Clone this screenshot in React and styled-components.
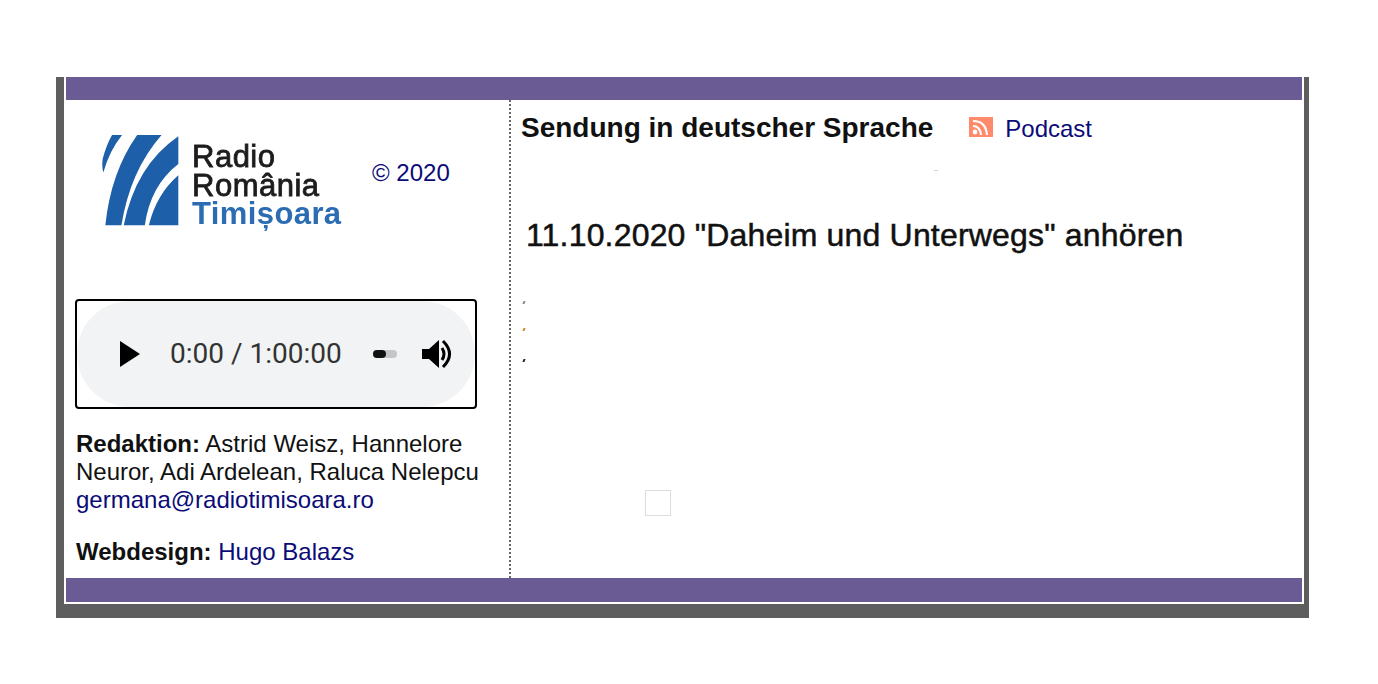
import styled, { createGlobalStyle } from 'styled-components';

const GlobalStyle = createGlobalStyle`
  body {
    margin: 0;
    background: #fff;
    font-family: "Liberation Sans", Arial, sans-serif;
    color: #111;
  }
`;

const Page = styled.div`
  padding: 77px 69px 66px 56px;
`;

const Frame = styled.div`
  border-style: solid;
  border-color: #5e5e5e;
  border-width: 0 5px 14px 8px;
  padding: 0 2px 2px;
`;

const Bar = styled.div`
  height: ${(p) => p.$height}px;
  background: #6b5b95;
`;

const Columns = styled.div`
  display: grid;
  grid-template-columns: 445px 1fr;
  height: 478px;
`;

const Side = styled.div`
  border-right: 2px dotted #666;
  padding: 0 9px;
  font-size: 24px;
  line-height: 28px;
`;

const LogoRow = styled.div`
  display: flex;
  align-items: flex-start;
  height: 199px;
  padding: 34px 0 0 27px;
  box-sizing: border-box;
`;

const LogoMark = styled.svg`
  width: 77px;
  height: 93px;
  flex: none;
  filter: blur(0.4px);
`;

const LogoText = styled.div`
  margin: 9px 0 0 13px;
  width: 180px;
  height: 85px;
  flex: none;
  font-size: 31px;
  line-height: 28.5px;
  letter-spacing: 0.5px;
  color: #1c1c1c;
  -webkit-text-stroke: 0.8px currentColor;
  filter: blur(0.3px);
  white-space: nowrap;
`;

const LogoCity = styled.div`
  color: #2b6cb3;
  font-weight: 700;
  letter-spacing: 0.4px;
  -webkit-text-stroke: 0;
`;

const Copyright = styled.a`
  color: #0b0b78;
  margin-top: 25px;
`;

const Player = styled.div`
  height: 106px;
  width: 398px;
  border: 2px solid #000;
  border-radius: 4px;
  background: #fff;
`;

const PlayerPill = styled.div`
  height: 100%;
  background: #f1f3f4;
  border-radius: 53px / 53px;
  display: flex;
  align-items: center;
  padding: 0 0 0 43px;
`;

const PlayIcon = styled.svg`
  width: 20px;
  height: 26px;
  flex: none;
  margin-right: 30px;
`;

const Time = styled.span`
  font-family: Roboto, "Liberation Sans", sans-serif;
  font-size: 28px;
  color: #333;
  white-space: nowrap;
`;

const VolumeTrack = styled.div`
  width: 24px;
  height: 8px;
  border-radius: 4px;
  background: #c4c5c6;
  margin: 0 25px 0 31px;
  flex: none;
`;

const VolumeFill = styled.div`
  width: 13px;
  height: 8px;
  border-radius: 4px;
  background: #111;
`;

const VolumeIcon = styled.svg`
  width: 32px;
  height: 30px;
  flex: none;
`;

const Credits = styled.p`
  margin: ${(p) => p.$top}px 0 0 1px;
  white-space: nowrap;
`;

const Link = styled.a`
  color: #0b0b78;
  text-decoration: none;
`;

const Main = styled.div`
  padding: 11px 0 0 10px;
`;

const HeadRow = styled.div`
  display: flex;
  align-items: center;
  height: 34px;
`;

const Heading = styled.h2`
  margin: 0;
  font-size: 28px;
  line-height: 34px;
  font-weight: 700;
  color: #111;
`;

const RssIcon = styled.svg`
  width: 24px;
  height: 20px;
  margin: -2px 12px 0 36px;
  flex: none;
`;

const PodcastLink = styled(Link)`
  font-size: 24px;
  margin-top: 2px;
`;

const Speck = styled.div`
  width: ${(p) => p.$w || 2}px;
  height: ${(p) => p.$h || 3}px;
  margin: ${(p) => p.$top}px 0 0 ${(p) => p.$left}px;
  background: ${(p) => p.$color};
  transform: skewX(-20deg);
`;

const Title = styled.h1`
  margin: 46px 0 0 5px;
  font-size: 32px;
  line-height: 36px;
  font-weight: 400;
  letter-spacing: 0.18px;
  color: #111;
  white-space: nowrap;
  -webkit-text-stroke: 0.5px currentColor;
`;

const Placeholder = styled.div`
  width: 24px;
  height: 24px;
  border: 1px solid #ddd;
  margin: 128px 0 0 124px;
`;

export default function App() {
  return (
    <>
      <GlobalStyle />
      <Page>
        <Frame>
          <Bar $height={23} />
          <Columns>
            <Side>
              <LogoRow>
                <LogoMark viewBox="20 18 230 272">
                  <g fill="#1d5fa8">
                    <path d="M50 18H80Q42 65 24 130Q19 115 22 90Q32 50 50 18Z" />
                    <path d="M125 18H198Q104 125 78 288H30Q46 130 125 18Z" />
                    <path d="M248 22V105Q164 170 148 288H85Q120 110 248 22Z" />
                    <path d="M248 138V288H160Q182 195 248 138Z" />
                  </g>
                </LogoMark>
                <LogoText>
                  Radio
                  <br />
                  România
                  <LogoCity>Timișoara</LogoCity>
                </LogoText>
                <Copyright>© 2020</Copyright>
              </LogoRow>
              <Player>
                <PlayerPill>
                  <PlayIcon viewBox="0 0 20 26">
                    <path d="M0 0L20 13L0 26Z" fill="#000" />
                  </PlayIcon>
                  <Time>0:00 / 1:00:00</Time>
                  <VolumeTrack>
                    <VolumeFill />
                  </VolumeTrack>
                  <VolumeIcon viewBox="0 0 32 30">
                    <path d="M0 10H7L17 1V29L7 20H0Z" fill="#000" />
                    <path d="M20 9Q24 15 20 21" fill="none" stroke="#000" strokeWidth="3" />
                    <path d="M21 2Q34 15 21 28" fill="none" stroke="#000" strokeWidth="3" />
                  </VolumeIcon>
                </PlayerPill>
              </Player>
              <Credits $top={21}>
                <b>Redaktion:</b> Astrid Weisz, Hannelore
                <br />
                Neuror, Adi Ardelean, Raluca Nelepcu
                <br />
                <Link href="#">germana@radiotimisoara.ro</Link>
              </Credits>
              <Credits $top={24}>
                <b>Webdesign:</b> <Link href="#">Hugo Balazs</Link>
              </Credits>
            </Side>
            <Main>
              <HeadRow>
                <Heading>Sendung in deutscher Sprache</Heading>
                <RssIcon viewBox="0 0 24 20">
                  <rect width="24" height="20" fill="#ff8a6c" />
                  <circle cx="6" cy="15" r="2.4" fill="#fff" />
                  <path d="M4 9Q11 9 12 18" fill="none" stroke="#fff" strokeWidth="2.2" />
                  <path d="M4 4Q17 4 18 18" fill="none" stroke="#fff" strokeWidth="2.2" />
                </RssIcon>
                <PodcastLink href="#">Podcast</PodcastLink>
              </HeadRow>
              <Speck $w={4} $h={1} $top={25} $left={413} $color="#e3c9c9" />
              <Title>11.10.2020 "Daheim und Unterwegs" anhören</Title>
              <Speck $top={48} $left={2} $color="#888" />
              <Speck $top={24} $left={2} $color="#c98a2a" />
              <Speck $top={28} $left={2} $color="#222" />
              <Placeholder />
            </Main>
          </Columns>
          <Bar $height={24} />
        </Frame>
      </Page>
    </>
  );
}
